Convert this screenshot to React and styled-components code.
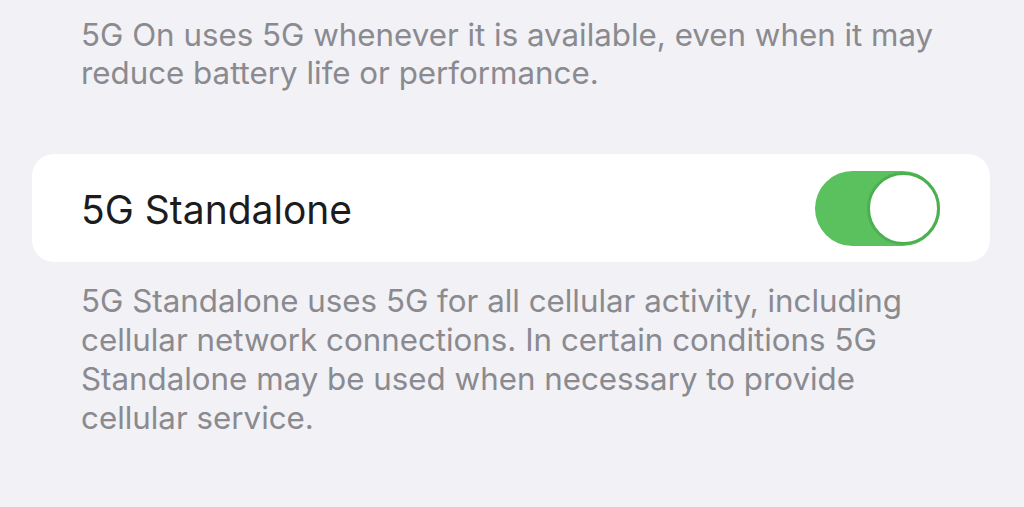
import styled, { createGlobalStyle } from "styled-components";

const GlobalStyle = createGlobalStyle`
  html, body {
    margin: 0;
    padding: 0;
    background: #f1f1f6;
  }
  body {
    font-family: Inter, "Liberation Sans", sans-serif;
    -webkit-font-smoothing: antialiased;
  }
`;

const Page = styled.div`
  width: 1024px;
  height: 507px;
  overflow: hidden;
  background: #f1f1f6;
  padding: 16px 34px 0 32px;
  box-sizing: border-box;
  display: flex;
  flex-direction: column;
`;

const Footnote = styled.p`
  margin: ${(p) => p.$top || 0}px 0 0;
  padding: 0 0 0 49px;
  max-width: 872px;
  font-size: 31.3px;
  line-height: ${(p) => p.$lh || 38}px;
  color: #8a8a8f;
`;

const Card = styled.div`
  margin-top: 62px;
  height: 108px;
  background: #ffffff;
  border-radius: 22px;
  display: flex;
  align-items: center;
  justify-content: space-between;
  padding: 0 50px 0 49px;
`;

const Label = styled.span`
  font-size: 39px;
  color: #1c1c1e;
  padding-top: 3px;
`;

const Track = styled.div`
  width: 125px;
  height: 75px;
  border-radius: 38px;
  background: #5bc15e;
  display: flex;
  align-items: center;
  justify-content: ${(p) => (p.$on ? "flex-end" : "flex-start")};
  box-sizing: border-box;
`;

const Knob = styled.div`
  width: 73px;
  height: 73px;
  border-radius: 50%;
  background: #ffffff;
  border: 3px solid #4caf50;
  box-sizing: border-box;
`;

const Toggle = ({ on }) => (
  <Track $on={on}>
    <Knob />
  </Track>
);

export default function App() {
  return (
    <>
      <GlobalStyle />
      <Page>
        <Footnote>
          5G On uses 5G whenever it is available, even when it may reduce
          battery life or performance.
        </Footnote>
        <Card>
          <Label>5G Standalone</Label>
          <Toggle on />
        </Card>
        <Footnote $top={20} $lh={39}>
          5G Standalone uses 5G for all cellular activity, including cellular
          network connections. In certain conditions 5G Standalone may be used
          when necessary to provide cellular service.
        </Footnote>
      </Page>
    </>
  );
}
